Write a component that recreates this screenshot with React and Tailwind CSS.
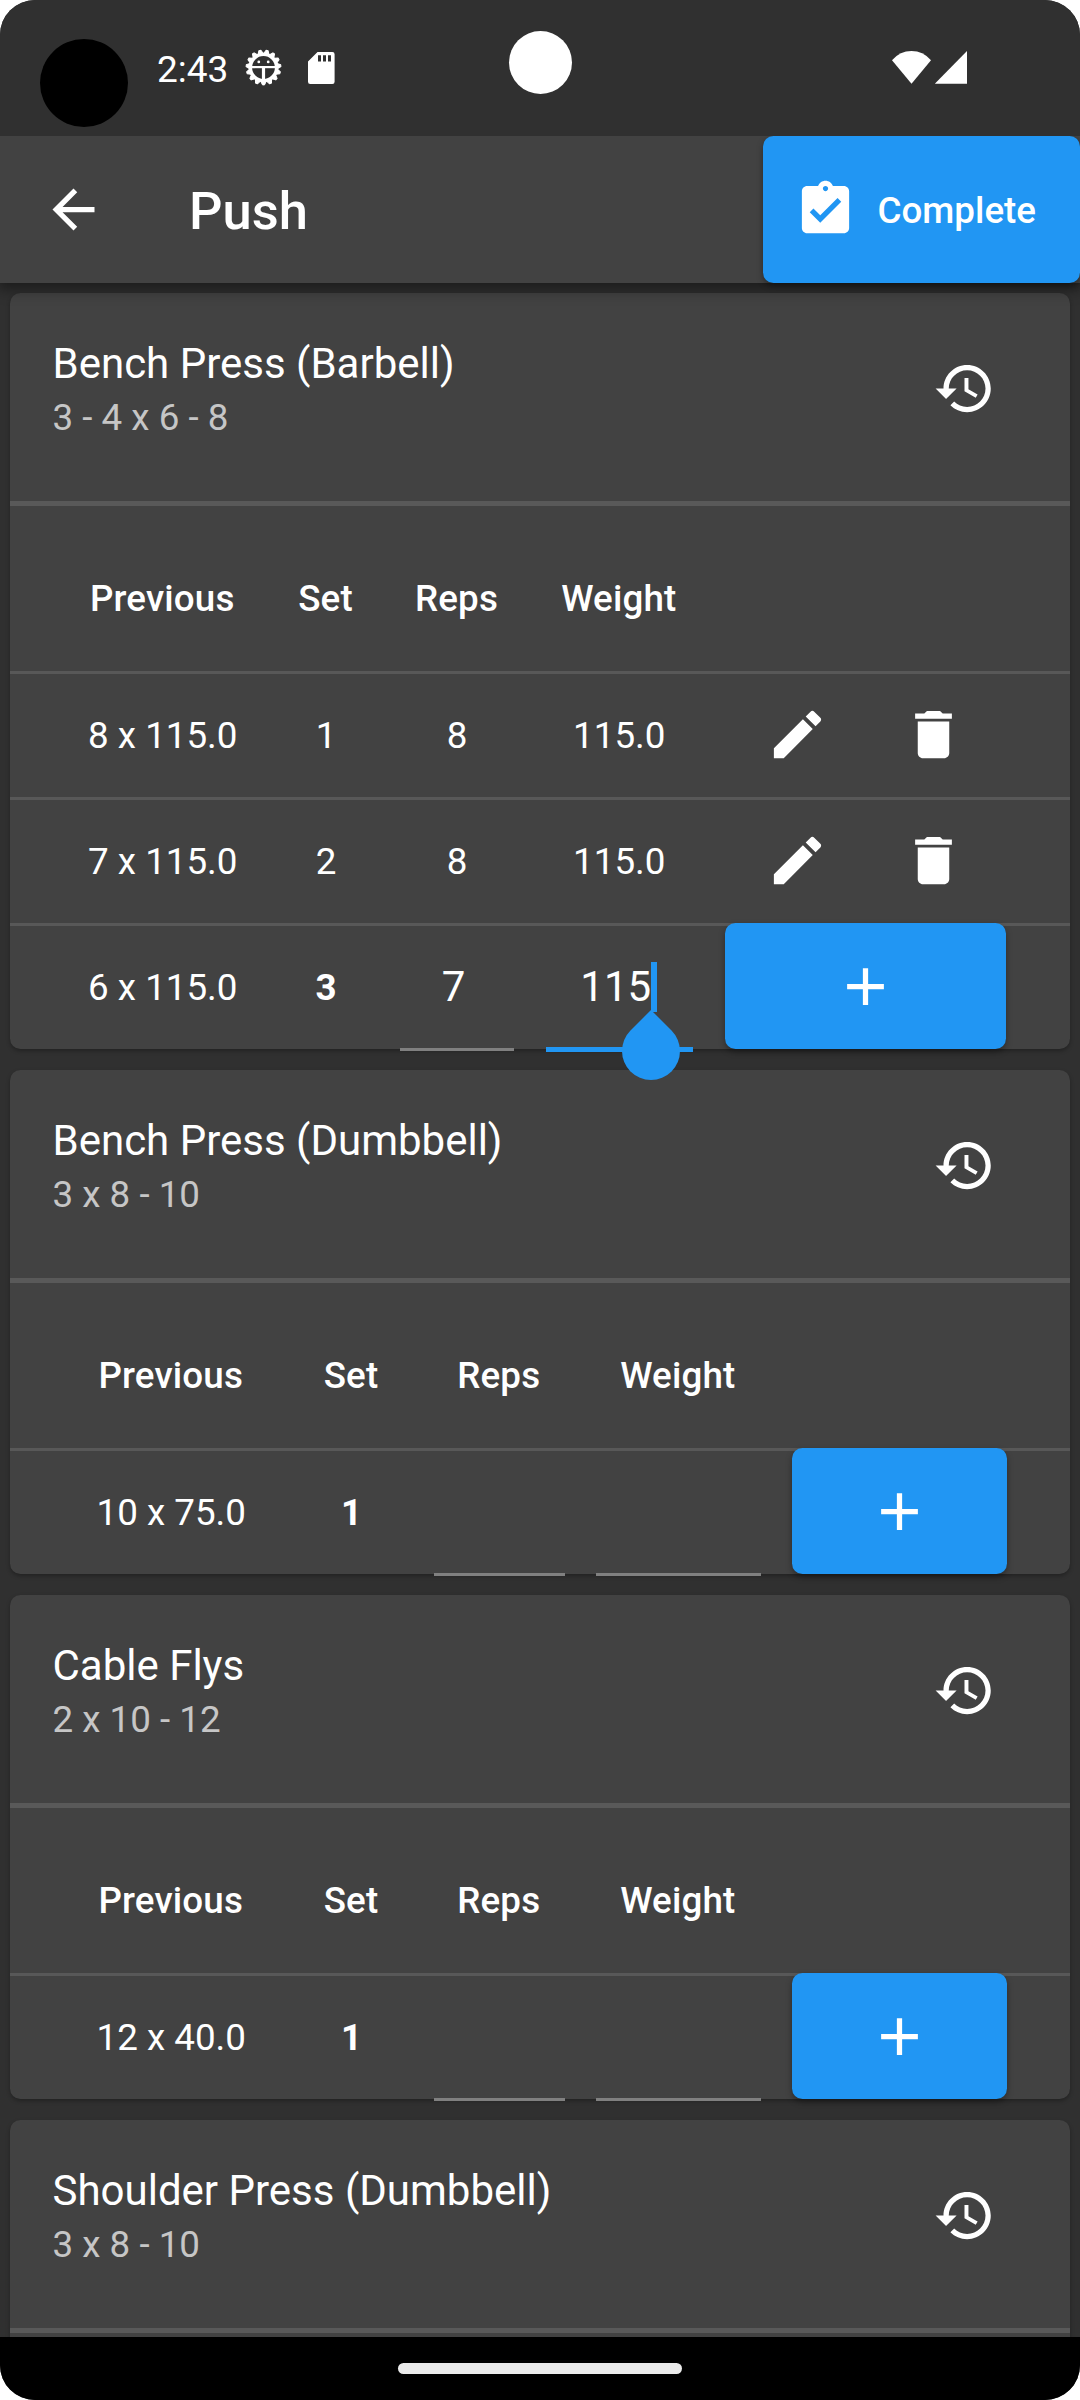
import React from "react";

const columnsLogged = "grid-cols-[178.5px_85px_114px_147.5px_281.5px]";
const columnsEmpty = "grid-cols-[195.5px_102px_130.5px_164.5px_214.5px]";

const exercises = [
  {
    name: "Bench Press (Barbell)",
    target: "3 - 4 x 6 - 8",
    columns: columnsLogged,
    sets: [
      { previous: "8 x 115.0", set: 1, reps: "8", weight: "115.0" },
      { previous: "7 x 115.0", set: 2, reps: "8", weight: "115.0" },
    ],
    entry: { previous: "6 x 115.0", set: 3, reps: "7", weight: "115", focused: true },
  },
  {
    name: "Bench Press (Dumbbell)",
    target: "3 x 8 - 10",
    columns: columnsEmpty,
    sets: [],
    entry: { previous: "10 x 75.0", set: 1, reps: "", weight: "" },
  },
  {
    name: "Cable Flys",
    target: "2 x 10 - 12",
    columns: columnsEmpty,
    sets: [],
    entry: { previous: "12 x 40.0", set: 1, reps: "", weight: "" },
  },
  {
    name: "Shoulder Press (Dumbbell)",
    target: "3 x 8 - 10",
  },
];

const iconPaths = {
  back: "M20 11H7.83l5.59-5.59L12 4l-8 8 8 8 1.41-1.41L7.83 13H20v-2z",
  complete:
    "M19 3h-4.18C14.4 1.84 13.3 1 12 1c-1.3 0-2.4.84-2.82 2H5c-1.1 0-2 .9-2 2v14c0 1.1.9 2 2 2h14c1.1 0 2-.9 2-2V5c0-1.1-.9-2-2-2zm-7 0c.55 0 1 .45 1 1s-.45 1-1 1-1-.45-1-1 .45-1 1-1zm-2 14l-4-4 1.41-1.41L10 14.17l6.59-6.59L18 9l-8 8z",
  history:
    "M13 3c-4.97 0-9 4.03-9 9H1l3.89 3.89.07.14L9 12H6c0-3.87 3.13-7 7-7s7 3.13 7 7-3.13 7-7 7c-1.93 0-3.68-.79-4.94-2.06l-1.42 1.42C8.27 19.99 10.51 21 13 21c4.97 0 9-4.03 9-9s-4.03-9-9-9zm-1 5v5l4.28 2.54.72-1.21-3.5-2.08V8H12z",
  edit: "M3 17.25V21h3.75L17.81 9.94l-3.75-3.75L3 17.25zM20.71 7.04c.39-.39.39-1.02 0-1.41l-2.34-2.34c-.39-.39-1.02-.39-1.41 0l-1.83 1.83 3.75 3.75 1.83-1.83z",
  remove: "M6 19c0 1.1.9 2 2 2h8c1.1 0 2-.9 2-2V7H6v12zM19 4h-3.5l-1-1h-5l-1 1H5v2h14V4z",
  add: "M19 13h-6v6h-2v-6H5v-2h6V5h2v6h6v2z",
};

function Icon({ name, className = "" }) {
  return (
    <svg viewBox="0 0 24 24" fill="currentColor" className={`size-[63px] shrink-0 ${className}`}>
      <path d={iconPaths[name]} />
    </svg>
  );
}

function BugGear() {
  const teeth = Array.from({ length: 15 }, (_, i) => i * 24 + 12);
  return (
    <svg viewBox="-18.5 -18.5 37 37" className="size-[37px]">
      <circle r="13.1" fill="none" stroke="white" strokeWidth="3.4" />
      {teeth.map((angle) => (
        <path
          key={angle}
          d="M-2.6 -14L-1 -17.4H1L2.6 -14Z"
          fill="white"
          stroke="white"
          strokeWidth="1"
          strokeLinejoin="round"
          transform={`rotate(${angle})`}
        />
      ))}
      <path d="M-12 -0.4H12" stroke="white" strokeWidth="2.2" />
      <path d="M0 0V13" stroke="white" strokeWidth="3.2" />
      <circle cx="-4.7" cy="-5.6" r="1.4" fill="white" />
      <circle cx="4.7" cy="-5.6" r="1.4" fill="white" />
    </svg>
  );
}

function StatusBar() {
  return (
    <header className="relative z-20 flex h-[136px] shrink-0 items-start bg-[#303030]">
      <div className="mt-[39px] ml-10 size-[88px] rounded-full bg-black" />
      <span className="mt-[48px] ml-[29px] w-[73px] text-[37px] leading-[44px]">2:43</span>
      <div className="mt-[49px] ml-[14.5px]">
        <BugGear />
      </div>
      <svg viewBox="0 0 27 32" className="mt-[52px] ml-[26px] h-8 w-[27px]">
        <path
          fillRule="evenodd"
          fill="white"
          d="M9.5 0H24.4Q26.6 0 26.6 2.2V29.8Q26.6 32 24.4 32H2.2Q0 32 0 29.8V9.5ZM10 3.3V9.5H13V3.3ZM15 3.3V9.5H18V3.3ZM20 3.3V9.5H23V3.3Z"
        />
      </svg>
      <div className="absolute top-[31px] left-[508.5px] size-[63px] rounded-full bg-white" />
      <svg viewBox="0 0 76 33" className="mt-[51px] mr-[112.5px] ml-auto h-[33px] w-[76px]" fill="white">
        <path d="M0 9.2Q8 0 19.5 0Q31 0 39 9.2L19.5 32.8Z" />
        <path d="M42.8 32.8L75 0V32.8Z" />
      </svg>
    </header>
  );
}

function AppBar() {
  return (
    <div className="relative z-10 flex h-[147px] shrink-0 items-center bg-[#424242] shadow-[0_4px_14px_2px_rgba(0,0,0,0.45)]">
      <Icon name="back" className="ml-[42px]" />
      <h1 className="ml-[84px] pt-[2px] text-[52.5px] leading-[62px] font-medium">Push</h1>
      <button className="ml-auto flex h-full w-[317.5px] items-center rounded-[10.5px] bg-[#2196f3] pl-[31px] shadow-[0_3px_6px_rgba(0,0,0,0.35)]">
        <Icon name="complete" />
        <span className="ml-[21px] pt-[2px] text-[36.75px] leading-[44px] font-medium">Complete</span>
      </button>
    </div>
  );
}

function Row({ columns, className, children }) {
  return <div className={`grid items-center gap-x-[31.5px] pl-[63.5px] text-center ${columns} ${className}`}>{children}</div>;
}

function LoggedSet({ columns, data }) {
  return (
    <Row columns={columns} className="h-[126px] border-t-[3px] border-[#585858]">
      <span>{data.previous}</span>
      <span>{data.set}</span>
      <span>{data.reps}</span>
      <span>{data.weight}</span>
      <div className="-mt-[2px] flex items-center gap-[73px] pl-[41.5px]">
        <Icon name="edit" />
        <Icon name="remove" />
      </div>
    </Row>
  );
}

function Field({ value, focused }) {
  return (
    <div className="relative h-[126px]">
      <div className="flex h-full items-center justify-center pt-px pr-[7px] text-[42px] leading-[50px]">
        <span className="relative">
          {value}
          {focused && <span className="absolute top-0 -right-[6px] h-[50px] w-[6px] bg-[#2196f3]" />}
        </span>
      </div>
      {focused ? (
        <>
          <div className="absolute -bottom-[3px] left-0 h-[5px] w-full bg-[#2196f3]" />
          <div className="absolute top-[98.5px] left-[76.5px] size-[58px] rotate-45 rounded-full rounded-tl-none bg-[#2196f3]" />
        </>
      ) : (
        <div className="absolute -bottom-[2px] left-0 h-[3px] w-full bg-[#808080]" />
      )}
    </div>
  );
}

function EntryRow({ columns, data }) {
  return (
    <div className="relative h-[126px]">
      <div className="h-[3px] bg-[#585858]" />
      <Row columns={columns} className="-mt-[3px] h-[126px]">
        <span className="pt-[3px]">{data.previous}</span>
        <span className="pt-[3px] font-bold">{data.set}</span>
        <Field value={data.reps} />
        <Field value={data.weight} focused={data.focused} />
        <button className="flex h-full items-center justify-center rounded-[10.5px] bg-[#2196f3] shadow-[0_3px_6px_rgba(0,0,0,0.35)]">
          <Icon name="add" />
        </button>
      </Row>
    </div>
  );
}

function SetTable({ exercise }) {
  return (
    <div className="pt-[19px] text-[36.75px] leading-[44px]">
      <Row columns={exercise.columns} className="-mb-px h-[147px] font-medium tracking-[0.15px]">
        <span className="-ml-px">Previous</span>
        <span className="-ml-px">Set</span>
        <span className="-ml-px">Reps</span>
        <span className="-ml-px">Weight</span>
      </Row>
      {exercise.sets.map((data) => (
        <LoggedSet key={data.set} columns={exercise.columns} data={data} />
      ))}
      <EntryRow columns={exercise.columns} data={exercise.entry} />
    </div>
  );
}

function ExerciseCard({ exercise, className }) {
  return (
    <section
      className={`mr-[10.5px] ml-[10px] shrink-0 rounded-[10.5px] bg-[#424242] shadow-[0_2px_4px_rgba(0,0,0,0.3)] ${className}`}
    >
      <div className="flex h-[208px] items-start justify-between pt-[46px] pr-[73.5px] pl-[42.5px]">
        <div>
          <h2 className="text-[42px] leading-[50px]">{exercise.name}</h2>
          <p className="mt-[7px] text-[36.75px] leading-[43px] text-[#c6c6c6]">{exercise.target}</p>
        </div>
        <Icon name="history" className="mt-[17.5px]" />
      </div>
      <div className="h-[5px] bg-[#595959]" />
      {exercise.sets ? <SetTable exercise={exercise} /> : <div className="h-[160px]" />}
    </section>
  );
}

export default function App() {
  return (
    <div className="h-[2400px] w-[1080px] bg-white">
      <div className="flex h-full flex-col overflow-hidden rounded-[35px] bg-[#303030] font-['Roboto',sans-serif] text-white">
        <StatusBar />
        <AppBar />
        <main className="flex min-h-0 flex-1 flex-col gap-[21px] overflow-hidden pt-[10px]">
          {exercises.map((exercise, i) => (
            <ExerciseCard key={exercise.name} exercise={exercise} className={i === 0 ? "relative z-[1]" : ""} />
          ))}
        </main>
        <nav className="flex h-[63px] shrink-0 items-start justify-center bg-black pt-[26px]">
          <div className="h-[11px] w-[284px] rounded-full bg-[#ebebeb]" />
        </nav>
      </div>
    </div>
  );
}
